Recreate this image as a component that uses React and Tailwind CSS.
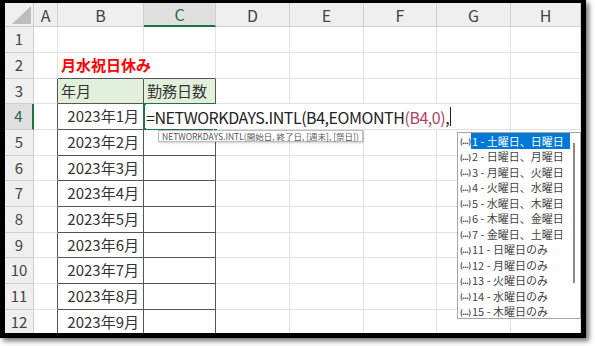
import React from "react";

const colWidths = ["w-[24px]", "w-[86px]", "w-[72px]", "w-[74px]", "w-[74px]", "w-[73px]", "w-[74px]", "w-[70px]"];
const colLetters = ["A", "B", "C", "D", "E", "F", "G", "H"];
const rowHeights = ["h-[26px]", "h-[26px]", "h-[25px]", "h-[26px]", "h-[26px]", "h-[25px]", "h-[26px]", "h-[26px]", "h-[25px]", "h-[26px]", "h-[26px]", "h-[25px]"];

const months = ["1", "2", "3", "4", "5", "6", "7", "8", "9"];

const weekendOptions = [
  "1 - 土曜日、日曜日",
  "2 - 日曜日、月曜日",
  "3 - 月曜日、火曜日",
  "4 - 火曜日、水曜日",
  "5 - 水曜日、木曜日",
  "6 - 木曜日、金曜日",
  "7 - 金曜日、土曜日",
  "11 - 日曜日のみ",
  "12 - 月曜日のみ",
  "13 - 火曜日のみ",
  "14 - 水曜日のみ",
  "15 - 木曜日のみ",
];

function ColumnHeader() {
  return (
    <div className="flex h-[24px]">
      <div className="relative w-[29px] shrink-0 bg-[#efefef] border-r border-b border-[#cfcfcf]">
        <svg className="absolute right-[2px] bottom-[2px]" width="19" height="18" viewBox="0 0 19 18">
          <polygon points="19,0 19,18 0,18" fill="#bdbdbd" />
        </svg>
      </div>
      {colLetters.map((c, i) =>
        c === "C" ? (
          <div
            key={c}
            className={`${colWidths[i]} shrink-0 flex items-center justify-center bg-[#e0e0e0] border-r border-[#cfcfcf] border-b-2 border-b-[#217346] text-[16px] text-[#1e6b3f]`}
          >
            {c}
          </div>
        ) : (
          <div
            key={c}
            className={`${colWidths[i]} shrink-0 flex items-center justify-center bg-[#efefef] border-r border-b border-[#cfcfcf] text-[16px] text-[#444]`}
          >
            {c}
          </div>
        )
      )}
    </div>
  );
}

function RowHeader({ n }) {
  if (n === 4) {
    return (
      <div className="w-[29px] shrink-0 flex items-center justify-center bg-[#e0e0e0] border-b border-[#cfcfcf] border-r-2 border-r-[#217346] text-[15px] text-[#1e6b3f]">
        {n}
      </div>
    );
  }
  return (
    <div className="w-[29px] shrink-0 flex items-center justify-center bg-[#efefef] border-r border-b border-[#cfcfcf] text-[15px] text-[#444]">
      {n}
    </div>
  );
}

function SheetRow({ n }) {
  const inTable = n >= 3;
  const h = rowHeights[n - 1];

  const aCls = inTable ? "border-r-[#555]" : "border-r-[#e1e1e1]";
  let bCls = "border-r-[#e1e1e1] border-b-[#e1e1e1]";
  let cCls = "border-r-[#e1e1e1] border-b-[#e1e1e1]";
  if (n === 2) {
    bCls = "border-r-white border-b-[#555]";
    cCls = "border-r-[#e1e1e1] border-b-[#555]";
  }
  if (inTable) {
    bCls = "border-r-[#555] border-b-[#555]";
    cCls = "border-r-[#555] border-b-[#555]";
  }

  let bContent = null;
  let cContent = null;
  if (n === 2) {
    bContent = (
      <span className="pl-[3px] whitespace-nowrap font-bold text-[15px] text-[#ff0000]">月水祝日休み</span>
    );
  }
  if (n === 3) {
    bContent = <span className="pl-[3px] text-[15px] text-[#333]">年月</span>;
    cContent = <span className="pl-[3px] whitespace-nowrap text-[15px] text-[#333]">勤務日数</span>;
  }
  if (n >= 4) {
    bContent = (
      <span className="ml-auto pr-[4px] text-[15px] text-[#333]">2023年{months[n - 4]}月</span>
    );
  }

  return (
    <div className={`flex ${h}`}>
      <RowHeader n={n} />
      <div className={`${colWidths[0]} shrink-0 border-r border-b border-b-[#e1e1e1] ${aCls}`} />
      <div
        className={`${colWidths[1]} shrink-0 flex items-center border-r border-b ${bCls} ${
          n === 3 ? "bg-[#e2efda]" : ""
        }`}
      >
        {bContent}
      </div>
      <div
        className={`relative ${colWidths[2]} shrink-0 flex items-center border-r border-b ${cCls} ${
          n === 3 ? "bg-[#e2efda]" : ""
        }`}
      >
        {cContent}
        {n === 4 && (
          <>
            <div className="absolute left-[-1px] top-[-1px] right-[-1px] bottom-[-1px] border-2 border-[#217346]" />
            <div className="absolute left-[2px] top-0 bottom-0 z-10 flex items-center bg-white pr-[2px] whitespace-nowrap text-[16px] tracking-[-0.45px] text-[#222]">
              <span>=NETWORKDAYS.INTL(B4,EOMONTH</span>
              <span className="text-[#b5445f]">(B4,0)</span>
              <span>,</span>
              <span className="ml-[1px] w-[1px] h-[19px] bg-[#222]" />
            </div>
            <div className="absolute right-[-3px] bottom-[-3px] w-[5px] h-[5px] bg-[#217346] border border-white" />
          </>
        )}
      </div>
      {colWidths.slice(3).map((w, i) => (
        <div key={i} className={`${w} shrink-0 border-r border-b border-[#e1e1e1]`} />
      ))}
    </div>
  );
}

function ArgTooltip() {
  return (
    <div className="absolute left-[153px] top-[127px] z-20 h-[12px] flex items-center px-[3px] bg-white border border-[#bcbcbc] shadow-[1px_1px_2px_rgba(0,0,0,0.2)] whitespace-nowrap text-[8.5px] leading-none text-[#555]">
      NETWORKDAYS.INTL(開始日, 終了日, [週末], [祭日])
    </div>
  );
}

function WeekendDropdown() {
  return (
    <div className="absolute left-[452px] top-[129px] z-20 w-[124px] h-[187px] flex bg-white border border-[#a6a6a6]">
      <div className="flex-1 flex flex-col">
        {weekendOptions.map((opt, i) => (
          <div key={opt} className="h-[15.5px] flex items-center">
            <span className="w-[13px] pl-[2px] text-[7.5px] font-bold tracking-[-0.5px] text-[#333]">(...)</span>
            <span
              className={`h-full flex-1 flex items-center pl-[1px] whitespace-nowrap text-[11px] ${
                i === 0 ? "bg-[#0078d7] text-white" : "text-[#444]"
              }`}
            >
              {opt}
            </span>
          </div>
        ))}
      </div>
      <div className="w-[10px] shrink-0 pt-[10px] pl-[3px]">
        <div className="w-[2px] h-[140px] bg-[#8a8a8a]" />
      </div>
    </div>
  );
}

export default function App() {
  const rows = [1, 2, 3, 4, 5, 6, 7, 8, 9, 10, 11, 12];
  return (
    <div className="w-[595px] h-[346px] bg-white overflow-hidden font-['Noto_Sans_CJK_JP',sans-serif]">
      <div className="w-[586px] h-[338px] bg-white border-black border-t-[3px] border-l-[5px] border-r-[5px] border-b-[5px] shadow-[3px_3px_5px_rgba(0,0,0,0.55)]">
        <div className="relative w-[576px] h-[330px] overflow-hidden">
          <ColumnHeader />
          {rows.map((n) => (
            <SheetRow key={n} n={n} />
          ))}
          <ArgTooltip />
          <WeekendDropdown />
        </div>
      </div>
    </div>
  );
}
